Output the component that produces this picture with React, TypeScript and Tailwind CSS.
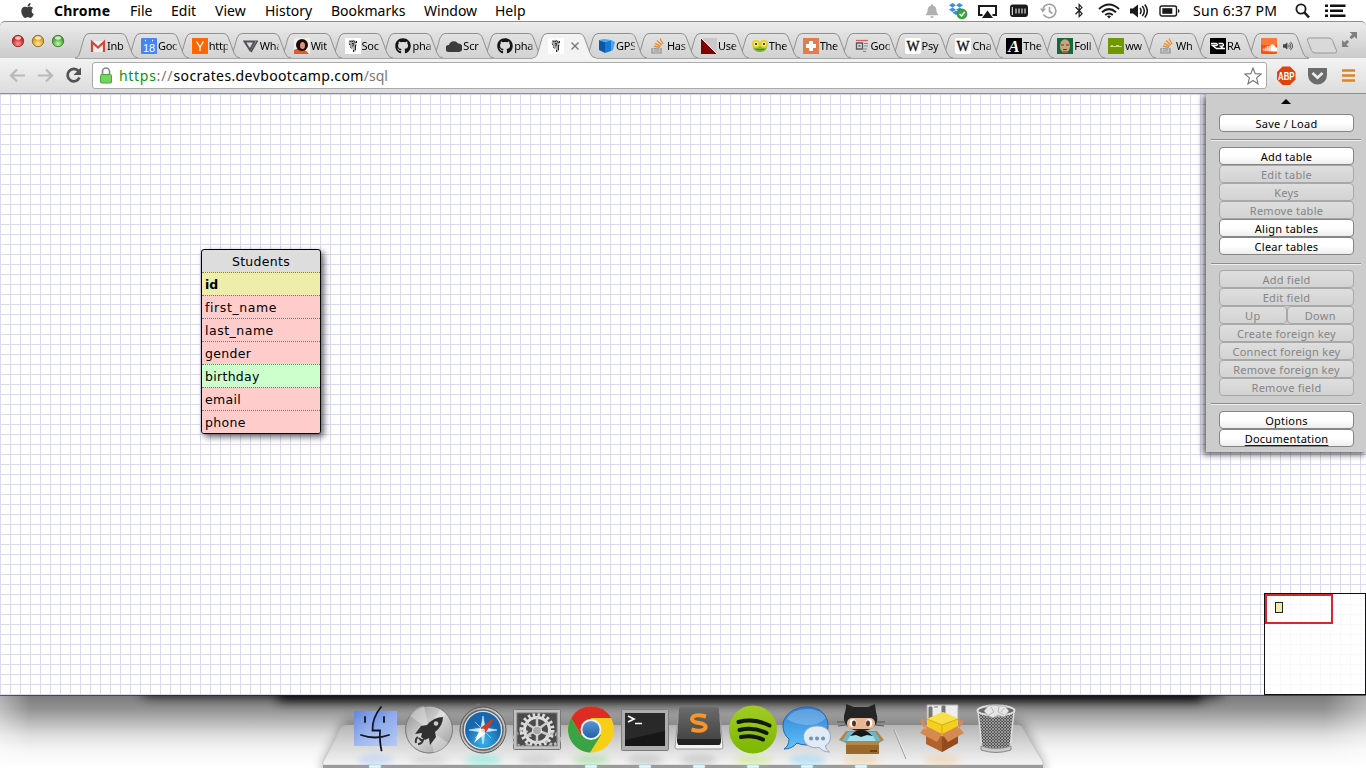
import React from "react";
import { FaApple, FaBell, FaDropbox, FaBluetoothB, FaGithub, FaSoundcloud, FaVolumeUp } from "react-icons/fa";

const UI = "font-['Noto_Sans','Open_Sans',sans-serif]";

/* ---------- menu bar ---------- */

const menus = [
  { label: "Chrome", cls: "w-[76px] font-bold tracking-[0.25px]" },
  { label: "File", cls: "w-[41px]" },
  { label: "Edit", cls: "w-[44px]" },
  { label: "View", cls: "w-[50px]" },
  { label: "History", cls: "w-[66px]" },
  { label: "Bookmarks", cls: "w-[93px]" },
  { label: "Window", cls: "w-[71px]" },
  { label: "Help", cls: "w-[40px]" },
];

function MenuBar() {
  return (
    <div className="flex h-[21px] items-center bg-white text-[14px] leading-[21px] text-black">
      <FaApple className="ml-[19px] mr-[18px] h-[17px] w-[17px] text-[#3c3c3c]" />
      {menus.map((m) => (
        <span key={m.label} className={"whitespace-nowrap " + m.cls}>{m.label}</span>
      ))}
      <div className="ml-auto flex items-center pr-5">
        <FaBell className="h-[14px] w-[14px] text-[#b0b0b0]" />
        <svg className="ml-[10px] h-[19px] w-[19px]" viewBox="0 0 19 19">
          <FaDropbox x="0" y="1" width="17" height="16" color="#3d8fd6" />
          <circle cx="13" cy="13" r="5" fill="#35a83b" stroke="#1d7c25" strokeWidth=".6" />
          <path d="M10.5 13l2 2 3.2-4" fill="none" stroke="#fff" strokeWidth="1.5" />
        </svg>
        <svg className="ml-[10px] h-4 w-[19px]" viewBox="0 0 19 16">
          <path d="M4.5 12H1V3h17v9h-3.500" fill="none" stroke="#1a1a1a" strokeWidth="2" />
          <path d="M9.500 7.500L15 15H4z" fill="#1a1a1a" />
        </svg>
        <svg className="ml-[13px] h-4 w-[18px]" viewBox="0 0 18 16">
          <rect x="0" y="1.500" width="18" height="12.500" rx="3" fill="#1a1a1a" />
          <path d="M2.300 4v8" stroke="#fff" strokeWidth="1" />
          <path d="M6 5.500v5M9 5.500v5M12 5.500v5M15 5.500v5" stroke="#ccc" strokeWidth="1.300" />
        </svg>
        <svg className="ml-[12px] h-4 w-[17px]" viewBox="0 0 17 16" fill="none" stroke="#a0a0a0" strokeWidth="1.600">
          <path d="M3 5.500A6.700 6.700 0 1 1 3.500 11.500M9.500 4v4.500l3 2" />
          <path d="M0 5.500h6L2.800 9.500z" fill="#a0a0a0" stroke="none" />
        </svg>
        <FaBluetoothB className="ml-[17px] h-[15px] w-[10px] text-[#222]" />
        <svg className="ml-[14px] h-4 w-[22px]" viewBox="0 0 22 16" fill="none" stroke="#1a1a1a" strokeWidth="2">
          <path d="M1 6Q11-3 21 6M4 9.200Q11 3 18 9.200M7.200 12Q11 9 14.800 12" />
          <path d="M9 13.200q2-1.500 4 0l-2 2.300z" fill="#1a1a1a" stroke="none" />
        </svg>
        <svg className="ml-[10px] h-4 w-[18px]" viewBox="0 0 18 16" fill="none" stroke="#1a1a1a" strokeWidth="1.500">
          <path d="M0 5.500h3l5-4v13l-5-4H0z" fill="#1a1a1a" stroke="none" />
          <path d="M10 5q2.200 3 0 6M12.300 3q4 5 0 10M14.800 1.500q5 6.500 0 13" />
        </svg>
        <svg className="ml-[11px] h-4 w-[21px]" viewBox="0 0 21 16">
          <rect x="1" y="3" width="16.500" height="10" rx="2" fill="none" stroke="#1a1a1a" strokeWidth="1.400" />
          <rect x="3.300" y="5.200" width="10" height="5.600" fill="#1a1a1a" />
          <path d="M19 6v4q1.500-.5 1.500-2T19 6z" fill="#1a1a1a" />
        </svg>
        <span className="ml-[13px] w-[84px] whitespace-nowrap tracking-[0.28px]">Sun 6:37 PM</span>
        <svg className="ml-[18px] h-4 w-[15px]" viewBox="0 0 15 16" fill="none" stroke="#1a1a1a">
          <circle cx="6" cy="6" r="4.600" strokeWidth="1.800" />
          <path d="M9.500 9.500l4.500 5" strokeWidth="2.600" />
        </svg>
        <svg className="ml-[15px] h-4 w-[21px]" viewBox="0 0 21 16" fill="#111">
          <path d="M0 1.500h3V4H0zM0 6.500h3V9H0zM0 11.500h3V14H0zM5 1.500h15.500V4H5zM5 6.500h13V9H5zM5 11.500h15.500V14H5z" />
        </svg>
      </div>
    </div>
  );
}

/* ---------- favicons, 16x16 ---------- */

const socrates = (
  <g>
    <rect width="16" height="16" fill="#fff" />
    <path d="M4 3q3-2 6-.5l2 1.500-1 2 1 1-1.500 2 .5 4-2 1L8 12l-1-3-1.500 1-1-2 1-1.500L3.500 6z" fill="#a8a8a8" />
    <path d="M4.500 3l2 .7M8.500 2.500l2 2.500M4 6l1.500 1M7 5.500h1.500l-.7 3M10.500 7v5M5.500 9l1 1.500M8.500 12v2M11.500 3v2M7.500 3v1" stroke="#222" strokeWidth="1" fill="none" />
  </g>
);
const github = <FaGithub width="16" height="16" size={16} color="#151515" />;
const wiki = (
  <g>
    <rect width="16" height="16" rx="2" fill="#fff" />
    <text x="1.500" y="13" fontSize="14" textLength="13" lengthAdjust="spacingAndGlyphs" fontFamily="Liberation Serif, serif" fill="#111" stroke="#111" strokeWidth=".35">W</text>
  </g>
);
const stack = (
  <g fill="none">
    <path d="M2 10v5h9v-5M3.500 13h6M3.500 10.700l6 .4" stroke="#8b8b8b" strokeWidth="1.200" />
    <path d="M4 8l6 1.500M5 5.300l5.700 2.900M7 2.500l4.800 4.500M10 .5l3 5.500" stroke="#ee8b2d" strokeWidth="1.300" />
  </g>
);

const icons: Record<string, React.ReactNode> = {
  gmail: (
    <g>
      <rect x="1" y="3" width="14" height="11" fill="#eee" />
      <path d="M2 14V4l6 5.500L14 4v10" fill="none" stroke="#d14836" strokeWidth="2.200" />
    </g>
  ),
  cal: (
    <g>
      <rect width="16" height="16" rx="1" fill="#4285f4" />
      <path d="M4 2.500h1M11 2.500h1" stroke="#fff" strokeWidth="1.500" />
      <text x="8" y="13.500" fontSize="11" textAnchor="middle" fontFamily="Liberation Sans, sans-serif" fill="#fff">18</text>
    </g>
  ),
  yc: (
    <g>
      <rect width="16" height="16" fill="#ff6600" />
      <path d="M4.500 3.500L8 9l3.500-5.500M8 8.500V13" fill="none" stroke="#fff" strokeWidth="1.300" />
    </g>
  ),
  tri: (
    <g fill="none" stroke="#4d5356">
      <path d="M1.500 3.500h10L7 12z" strokeWidth="2" />
      <path d="M14.500 2.500L8 14" strokeWidth="1.600" />
    </g>
  ),
  person: (
    <g>
      <rect width="16" height="16" fill="#f4efe9" />
      <path d="M0 12q8-5 15 4H0z" fill="#d95b32" />
      <circle cx="8" cy="7" r="6" fill="#190b09" />
      <ellipse cx="8.500" cy="7.500" rx="2.500" ry="3.500" fill="#e09470" />
    </g>
  ),
  socrates,
  github,
  cloud: <path d="M3 14a3.500 3.500 0 0 1 0-7 5 5 0 0 1 9-1.500A4 4 0 0 1 13 14z" fill="#3c3c3c" />,
  dbc: (
    <g>
      <path d="M0 2l6 2v11l-6-3z" fill="#0c58a6" />
      <path d="M6 4l6-2v11l-6 2z" fill="#1679d2" />
      <path d="M12 2l4 2-2 8-2 1zM5 1l7 1-6 2-6-2z" fill="#4aa5ee" />
    </g>
  ),
  stack,
  red: (
    <g>
      <rect width="16" height="16" fill="#c9c9c9" />
      <path d="M0 0l16 16H0z" fill="#800000" />
      <path d="M0 0l16 16" stroke="#fff" />
    </g>
  ),
  frog: (
    <g>
      <path d="M1 8h14q0 6-7 6T1 8z" fill="#84b735" />
      <circle cx="4" cy="6" r="4" fill="#e5ce20" />
      <circle cx="12" cy="6" r="4" fill="#e5ce20" />
      <circle cx="4" cy="6" r="2.200" fill="#fff8a0" />
      <circle cx="12" cy="6" r="2.200" fill="#fff8a0" />
      <circle cx="4" cy="6" r="1" />
      <circle cx="12" cy="6" r="1" />
      <path d="M4 11q4 2 8 0" stroke="#4c7a1d" fill="none" />
    </g>
  ),
  plus: (
    <g>
      <rect width="16" height="16" fill="#e27c4c" />
      <path d="M8 3v10M3 8h10" stroke="#fff" strokeWidth="4" />
    </g>
  ),
  news: (
    <g fill="none">
      <path d="M2 2.500h12" stroke="#d96060" strokeWidth="1.300" />
      <path d="M2.500 5h6v6h-6zM4.500 8h2" stroke="#555" strokeWidth="1.300" />
      <path d="M10 5.500h4M10 8h4M7 11h6M9 13.500h3" stroke="#888" />
    </g>
  ),
  wiki,
  a: (
    <g>
      <rect width="16" height="16" fill="#000" />
      <text x="8" y="14" fontSize="17" fontWeight="bold" fontStyle="italic" textAnchor="middle" fontFamily="Liberation Serif, serif" fill="#fff">A</text>
    </g>
  ),
  face: (
    <g>
      <rect width="16" height="16" fill="#16683e" />
      <ellipse cx="8" cy="8" rx="5" ry="6.800" fill="#c9a47c" />
      <path d="M4 7h3M9 7h3M6 11.500h4" stroke="#5a3f2a" />
      <path d="M5 15h6l-1-2H6z" fill="#8a6a4a" />
    </g>
  ),
  green: (
    <g>
      <rect width="16" height="16" fill="#6f9700" />
      <path d="M2 8.500h12M3 7.500h2M8 7.500h3" stroke="#c8dc8b" strokeWidth="1.200" />
    </g>
  ),
  ra: (
    <g>
      <rect width="16" height="16" fill="#000" />
      <path d="M1 5.500h5.500q2 1.500-.5 2H2.500l4 3H15M8.500 5.500h4q2 1.500 0 2.500l-2 .3 2.500 2" fill="none" stroke="#fff" strokeWidth="1.400" />
    </g>
  ),
  sc: (
    <g>
      <rect width="16" height="16" rx="1.500" fill="#ff4f0a" />
      <rect width="16" height="7" rx="1.500" fill="#ff7838" />
      <FaSoundcloud x="1.500" y="2" width="13" height="12" color="#fff" />
    </g>
  ),
};

const tabs: [string, string][] = [
  ["gmail", "Inb"], ["cal", "Goo"], ["yc", "http"], ["tri", "Wha"], ["person", "Wit"],
  ["socrates", "Soc"], ["github", "pha"], ["cloud", "Scr"], ["github", "pha"], ["socrates", ""],
  ["dbc", "GPS"], ["stack", "Has"], ["red", "Use"], ["frog", "The"], ["plus", "The"],
  ["news", "Goo"], ["wiki", "Psy"], ["wiki", "Cha"], ["a", "The"], ["face", "Foll"],
  ["green", "ww"], ["stack", "Wh"], ["ra", "RA"], ["sc", ""],
];

function Tab({ icon, title, index }: { icon: string; title: string; index: number }) {
  const active = index === 9;
  const audio = index === 23;
  const shape = "M0 25C4 24 4 22 5 19L9 5Q10.500 .5 14 .5H46Q50 .5 51.500 5L57 20Q59 25 63 25";
  return (
    <div className="relative w-[50.91px] shrink-0" style={{ zIndex: active ? 50 : 30 - index }}>
      <svg className="absolute left-0 top-0 h-[26px] w-[63px]" viewBox="0 0 63 26">
        <path d={shape} fill={active ? "#f3f3f3" : "url(#tabFill)"} stroke="#929292" strokeWidth="1" />
        {active ? <path d="M0 25.500h63" stroke="#f3f3f3" strokeWidth="1.200" /> : <path d="M0 25.500h63" stroke="#a5a5a5" />}
      </svg>
      <div className="relative flex h-[25px] items-center pl-[15px] pt-px">
        <svg className="h-4 w-4 shrink-0" viewBox="0 0 16 16">{icons[icon]}</svg>
        {active ? (
          <svg className="ml-[7px] h-2 w-2" viewBox="0 0 8 8"><path d="M.5 .5l7 7M7.500 .5l-7 7" stroke="#777" strokeWidth="1.400" /></svg>
        ) : audio ? (
          <FaVolumeUp className="ml-[6px] h-[10px] w-[10px] shrink-0 text-[#444]" />
        ) : (
          <span className="ml-px w-[19px] shrink-0 overflow-hidden whitespace-nowrap text-[11px] leading-4 tracking-[-0.25px] text-black [mask-image:linear-gradient(to_right,black_75%,#0006)]">{title}</span>
        )}
      </div>
    </div>
  );
}

function TabStrip() {
  return (
    <div className="flex h-[37px] rounded-t-[5px] border-t border-[#8d8d8d] bg-linear-to-b from-[#ececec] to-[#cbcbcb]">
      <svg className="h-[35px] w-[75px] shrink-0" viewBox="0 0 75 35">
        <defs>
          <linearGradient id="tabFill" x2="0" y2="1"><stop stopColor="#e2e2e2" /><stop offset="1" stopColor="#d2d2d2" /></linearGradient>
          <radialGradient id="lr" cy=".75"><stop stopColor="#ff9b95" /><stop offset="1" stopColor="#d3262a" /></radialGradient>
          <radialGradient id="ly" cy=".75"><stop stopColor="#ffe9a0" /><stop offset="1" stopColor="#dd9b22" /></radialGradient>
          <radialGradient id="lg" cy=".75"><stop stopColor="#c4f6a5" /><stop offset="1" stopColor="#4aa83c" /></radialGradient>
        </defs>
        {[["lr", 18, "#8f2826"], ["ly", 38, "#93691f"], ["lg", 58, "#3a7a31"]].map(([g, x, s]) => (
          <g key={g}>
            <circle cx={x} cy="19" r="5.700" fill={`url(#${g})`} stroke={s as string} strokeWidth=".9" />
            <ellipse cx={x} cy="16" rx="3" ry="1.700" fill="#fff" opacity=".75" />
          </g>
        ))}
      </svg>
      <div className="flex pt-[11px]">
        {tabs.map(([icon, title], i) => <Tab key={i} icon={icon} title={title} index={i} />)}
      </div>
      <svg className="ml-[9px] mt-[15px] h-[17px] w-[32px] shrink-0" viewBox="0 0 32 17">
        <path d="M3 1h20q2.500 0 3.500 2.500l4 10q.7 2.500-2 2.500H9q-2.500 0-3.500-2.500l-4-10Q1 1 3 1z" fill="#d9d9d9" stroke="#999" />
      </svg>
      <svg className="ml-[4px] mt-[10px] h-[15px] w-[15px] shrink-0" viewBox="0 0 15 15" fill="#808080">
        <path d="M7.500 0H15v7l-2.500-2.300-3 2.600L7.500 5.300l2.700-3zM7 15H0V8l2.300 2.300 2.900-2.400 2 2-2.800 2.700z" />
      </svg>
    </div>
  );
}

function Toolbar() {
  return (
    <div className="flex h-[36px] items-center border-b border-[#8e8e8e] bg-linear-to-b from-[#f3f3f3] to-[#dcdcdc]">
      <svg className="h-[36px] w-[92px] shrink-0" viewBox="0 0 92 36" fill="none">
        <path d="M25 17.500H11.500M17 11.500l-6 6 6 6M38 17.500h13.500M46 11.500l6 6-6 6" stroke="#b9b9b9" strokeWidth="2.200" />
        <path d="M78.500 13A6.200 6.200 0 1 0 79.500 19.500" stroke="#525252" strokeWidth="2.700" />
        <path d="M81 9.500v7.500h-7.500z" fill="#525252" />
      </svg>
      <div className="flex h-[27px] w-[1175px] shrink-0 items-center rounded-[3px] border border-[#aaa] bg-white pl-[7px] pr-[4px]">
        <svg className="h-[17px] w-3" viewBox="0 0 12 17">
          <path d="M2.500 8V4.500a3.500 3.500 0 0 1 7 0V8" fill="none" stroke="#8a8a8a" strokeWidth="1.700" />
          <rect x=".5" y="7.500" width="11" height="8.500" rx="1" fill="#72d45e" stroke="#49a83c" />
        </svg>
        <span className="ml-[7px] whitespace-nowrap text-[14px] leading-[22px] tracking-[0.39px] text-black">
          <span className="tracking-[0.7px] text-[#0a9411]">https</span><span className="tracking-[0.9px] text-[#777]">://</span>socrates.devbootcamp.com<span className="tracking-normal text-[#777]">/sql</span>
        </span>
        <svg className="ml-auto h-[18px] w-[18px]" viewBox="0 0 18 18">
          <path d="M9 1l2.200 5.600 6 .4-4.600 3.900L14.100 17 9 13.500 3.900 17l1.500-6.100L.8 7l6-.4z" fill="#fff" stroke="#757575" strokeWidth="1.100" />
        </svg>
      </div>
      <svg className="h-[36px] w-[99px] shrink-0" viewBox="0 0 99 36">
        <path d="M15.500 8.500h7.500l5.500 5.500v7.500L23 27h-7.500L10 21.500V14z" fill="#e0440e" />
        <text x="19.300" y="21.500" fontSize="10.500" fontWeight="bold" textAnchor="middle" textLength="16.500" lengthAdjust="spacingAndGlyphs" fontFamily="Liberation Sans, sans-serif" fill="#fff">ABP</text>
        <path d="M41 10h19v7a9.500 9.500 0 0 1-19 0z" fill="#6c6c6c" />
        <path d="M45.500 15l5 4.700 5-4.700" fill="none" stroke="#eee" strokeWidth="2.600" />
        <path d="M75 12.500h13M75 17.500h13M75 22.500h13" stroke="#df8420" strokeWidth="2.600" />
      </svg>
    </div>
  );
}

/* ---------- SQL designer ---------- */

const fields = [
  { name: "id", cls: "bg-[#eeeeaa] font-bold tracking-[-0.1px]" },
  { name: "first_name", cls: "bg-[#ffcccc] tracking-[0.6px]" },
  { name: "last_name", cls: "bg-[#ffcccc] tracking-[0.5px]" },
  { name: "gender", cls: "bg-[#ffcccc]" },
  { name: "birthday", cls: "bg-[#ccffcc]" },
  { name: "email", cls: "bg-[#ffcccc]" },
  { name: "phone", cls: "bg-[#ffcccc]" },
];

function StudentsTable() {
  return (
    <div className="absolute left-[201px] top-[155px] w-[120px] overflow-visible rounded-[3px] border border-black bg-[#ddd] font-['DejaVu_Sans',sans-serif] text-[12.500px] tracking-[0.3px] text-black shadow-[3px_3px_6px_rgba(0,0,0,0.6)]">
      <div className="h-[22px] text-center leading-[23px]">Students</div>
      {fields.map((f) => (
        <div key={f.name} className={"h-[23px] border-t border-dotted border-[#777] pl-[3px] leading-[23px] last:rounded-b-[2px] " + f.cls}>{f.name}</div>
      ))}
    </div>
  );
}

function Btn({ label, off = false, link = false }: { label: string; off?: boolean; link?: boolean }) {
  return (
    <button
      className={
        "block h-[18px] w-full rounded-[4px] border pt-px text-center text-[11px] leading-[16px] tracking-[0.25px] whitespace-nowrap " +
        (off
          ? "border-[#a8a8a8] bg-linear-to-b from-[#dedede] to-[#d3d3d3] text-[#858585]"
          : "border-[#858585] bg-linear-to-b from-white from-50% to-[#ededed] text-black")
      }
    >
      {link ? <span className="underline decoration-[#0000cc] decoration-1 underline-offset-2">{label}</span> : label}
    </button>
  );
}

function Rule() {
  return <div className="ml-[5px] mr-[5px] my-[7px] h-[2px] border-t border-b border-t-[#8d8d8d] border-b-[#eee]" />;
}

function Panel() {
  return (
    <div className="absolute right-0 top-0 h-[358px] w-[160px] bg-[#ccc] shadow-[-2px_2px_6px_1px_rgba(0,0,0,0.6)]">
      <div className="flex h-[20px] justify-center pt-[5px]">
        <svg className="h-[5px] w-[10px]" viewBox="0 0 10 5"><path d="M5 0l5 5H0z" /></svg>
      </div>
      <div className="pl-[13px] pr-[12px]"><Btn label="Save / Load" /></div>
      <Rule />
      <div className="pl-[13px] pr-[12px] pb-px -mt-px">
        <Btn label="Add table" />
        <Btn label="Edit table" off />
        <Btn label="Keys" off />
        <Btn label="Remove table" off />
        <Btn label="Align tables" />
        <Btn label="Clear tables" />
      </div>
      <Rule />
      <div className="pl-[13px] pr-[12px] -mt-[2px]">
        <Btn label="Add field" off />
        <Btn label="Edit field" off />
        <div className="flex">
          <Btn label="Up" off />
          <Btn label="Down" off />
        </div>
        <Btn label="Create foreign key" off />
        <Btn label="Connect foreign key" off />
        <Btn label="Remove foreign key" off />
        <Btn label="Remove field" off />
      </div>
      <Rule />
      <div className="-mt-px pl-[13px] pr-[12px]">
        <Btn label="Options" />
        <Btn label="Documentation" link />
      </div>
    </div>
  );
}

function Minimap() {
  return (
    <div className="absolute bottom-0 right-0 h-[102px] w-[102px] border border-[#111] bg-white/85">
      <div className="h-[30px] w-[68px] border-2 border-[#d92626] pl-[8px] pt-[6px]">
        <div className="h-[11px] w-[8px] border border-[#222] bg-[#eeeeaa]" />
      </div>
    </div>
  );
}

/* ---------- dock ---------- */

const dockIcons: React.ReactNode[] = [
  <g key="finder">
    <rect x="6" y="15" width="43" height="35" fill="url(#finder)" />
    <path d="M6 15h24q-5 10-5 20h7v15H6z" fill="#fff" opacity=".16" />
    <path d="M17 21v5M36 21v5" stroke="#1b2238" strokeWidth="2" strokeLinecap="round" />
    <path d="M33 11q-9 11-8.500 23.500h7.500q-.5 12 1.500 20M13 39q14 5 28 0" fill="none" stroke="#101827" strokeWidth="1.800" strokeLinecap="round" />
  </g>,
  <g key="launchpad">
    <circle cx="27" cy="33.500" r="23.500" fill="url(#silver)" stroke="#777" />
    <path d="M27 33.500L8 20q5-9 14-10zM27 33.500L46 47q-5 8-14 10zM27 33.500L38 13l6 5z" fill="#fff" opacity=".3" />
    <path d="M41 21q-9 0-16 8l-6 1-6 8 7-1-1 4 4 3 4-2 1 7 6-8-1-5q8-6 8-15z" fill="#303030" />
    <circle cx="34" cy="27.500" r="2.300" fill="#ccc" />
    <path d="M16 41q-3 2-2 6M17 42q2 3 4 2-1 4-5 4" stroke="#333" strokeWidth="2" fill="none" />
  </g>,
  <g key="safari">
    <circle cx="22" cy="10.500" r="2.500" fill="none" stroke="#777" />
    <circle cx="27" cy="34" r="23" fill="url(#silver)" stroke="#555" />
    <circle cx="27" cy="34" r="20" fill="none" stroke="#666" strokeWidth="1.500" />
    <circle cx="27" cy="34" r="18.500" fill="url(#blue)" stroke="#e4e4e4" strokeWidth="1.200" />
    <path d="M27 20l2 12 12 2-12 2-2 12-2-12-12-2 12-2zM19 26l16 16M35 26L19 42" fill="#c5eafb" stroke="#c5eafb" strokeWidth=".7" />
    <path d="M18 47l6.500-15 5 5z" fill="#fff" />
    <path d="M39 21l-14.500 11 5 5z" fill="#d73821" />
    <circle cx="27" cy="34.500" r="2" fill="#ddd" />
  </g>,
  <g key="prefs">
    <rect x="3.500" y="13.500" width="47" height="40" rx="1" fill="#c2c2c2" stroke="#777" />
    <rect x="7" y="17" width="40" height="33" fill="#4b4b4b" />
    <circle cx="12" cy="43" r="8" fill="none" stroke="#bbb" strokeWidth="4" strokeDasharray="3 2" />
    <circle cx="43" cy="43" r="6" fill="none" stroke="#bbb" strokeWidth="4" strokeDasharray="3 2" />
    <circle cx="27" cy="34" r="15.500" fill="none" stroke="#ddd" strokeWidth="4" strokeDasharray="2.500 2.370" />
    <circle cx="27" cy="34" r="12.500" fill="none" stroke="#dedede" strokeWidth="3" />
    <path d="M27 34V21M27 34l12 5M27 34l-11 6M27 34l11-8M27 34l-11-7M27 34v13" stroke="#ccc" strokeWidth="2.500" />
    <circle cx="27" cy="34.500" r="4.500" fill="#aaa" stroke="#eee" />
    <rect x="7" y="17" width="40" height="33" fill="none" stroke="#777" />
    <path d="M4 50.500h46v2.500h-46z" fill="#c2c2c2" />
  </g>,
  <g key="chrome">
    <circle cx="27" cy="33.500" r="23" fill="#f7cf16" />
    <path d="M27 22h20.300A23 23 0 0 0 7.100 22L17 39z" fill="#dc2c23" />
    <path d="M7.100 22A23 23 0 0 0 26 56.500L37 39 27 34 17 39z" fill="#3aa345" />
    <circle cx="27" cy="33.500" r="10.500" fill="#f1f1f1" />
    <circle cx="27" cy="33.500" r="8.600" fill="url(#chromeBlue)" />
  </g>,
  <g key="terminal">
    <rect x="3.500" y="13.500" width="47" height="41" rx="1" fill="#adadad" stroke="#7e7e7e" />
    <rect x="7" y="17" width="40" height="33" fill="#171717" />
    <path d="M47 17v18L7 44V17z" fill="#fff" opacity=".08" />
    <path d="M10 20l6 3-6 3M17 27.500h7" fill="none" stroke="#fff" strokeWidth="1.700" />
  </g>,
  <g key="sublime">
    <path d="M7 14h40l4 37q0 2-2 2H5q-2 0-2-2z" fill="#f2f2f2" stroke="#999" />
    <path d="M9 11h36q1.500 0 2 2l2 29q0 5-2 6H7q-2-1-2-6l2-29q.5-2 2-2z" fill="url(#sub)" />
    <path d="M5 43h44q0 6-2 6H7q-2 0-2-6z" fill="#222" />
    <path d="M34 20.500q-13-3.500-14 2.500 0 3 7 4 7.500 1 6.500 5-2.500 4.500-14 1.500" fill="none" stroke="#f7942a" strokeWidth="4" />
  </g>,
  <g key="spotify">
    <circle cx="27" cy="33.500" r="24" fill="url(#spot)" />
    <path d="M12.500 26q16-4 31 3.500M13.500 34q14-3.500 27 3M15 41q12-2.500 22 2.500" fill="none" stroke="#101a08" strokeWidth="4" strokeLinecap="round" />
  </g>,
  <g key="messages">
    <path d="M27 11c13 0 21 8 21 19S40 49 27 49q-6 0-10-2-5 6-13 6 5-3 5-10-6-5-6-13c0-11 11-19 24-19z" fill="url(#msg)" stroke="#2466aa" />
    <path d="M7 23q5-10 20-10t19 9q-8 8-20 7T7 23z" fill="#fff" opacity=".22" />
    <path d="M37 30c9 0 13.500 5 13.500 11 0 4-2 7-5 8.500 0 3 2 5 4 6.500-5 0-8-2-10-4.500-10 1.500-16-4-16-10.500S29 30 37 30z" fill="#e2ebf5" stroke="#91a9c1" />
    <path d="M31 42.500h.1M37 42.500h.1M43 42.500h.1" stroke="#7194b8" strokeWidth="4" strokeLinecap="round" />
  </g>,
  <g key="octocat">
    <path d="M12 35h31l7 9-5 3v11H12V47l-7-3z" fill="#b88445" />
    <path d="M14 36h27l6 9H8z" fill="#6bb8cc" />
    <path d="M18 37h19l5 8H13z" fill="#a5dfea" />
    <path d="M12 46h33v12H12z" fill="#9b692c" />
    <path d="M12 46h33v3H12z" fill="#b88445" />
    <path d="M12 12V8l8 3h14l7-3 1 8q3 8-1 14-5 5-14 5t-14-5q-5-6-2-14z" fill="#252525" />
    <rect x="13" y="22" width="28" height="11" rx="5" fill="#e7b694" />
    <ellipse cx="19" cy="27" rx="3.300" ry="4" fill="#fff" />
    <ellipse cx="35" cy="27" rx="3.300" ry="4" fill="#fff" />
    <ellipse cx="20" cy="27.500" rx="2" ry="3" fill="#5b3426" />
    <ellipse cx="34" cy="27.500" rx="2" ry="3" fill="#5b3426" />
    <path d="M16 40q5-6 11-6t12 6l-6-1-6 2-5-2z" fill="#171717" />
    <path d="M3 26h8M4 30l8-1M51 26h-8M50 30l-8-1" stroke="#555" />
    <path d="M36 55h7" stroke="#59350f" strokeWidth="1.500" />
  </g>,
];

function Glow({ color }: { color: string }) {
  return <ellipse cx="27" cy="64" rx="18" ry="5" fill={color} opacity=".35" filter="url(#blur)" />;
}

const reflections = ["#8fb7ff", "#bbbbbb", "#35e8c8", "#aaaaaa", "#6ad05a", "#999999", "#999999", "#aee83b", "#55c8ff", "#f5bc68"];
const running = [0, 4, 5, 6, 7, 8, 9];

function Dock() {
  return (
    <div className="relative h-[73px] overflow-hidden bg-white">
      <svg className="absolute left-0 top-0 h-[73px] w-[1366px]" viewBox="0 -1 1366 73">
        <defs>
          <filter id="blur" x="-50%" y="-100%" width="200%" height="300%"><feGaussianBlur stdDeviation="3" /></filter>
          <filter id="soft" x="-10%" y="-100%" width="120%" height="300%"><feGaussianBlur stdDeviation="6" /></filter>
          <linearGradient id="fall" x2="0" y2="1">
            <stop stopColor="#000" stopOpacity=".52" />
            <stop offset=".2" stopColor="#000" stopOpacity=".42" />
            <stop offset=".38" stopColor="#000" stopOpacity=".27" />
            <stop offset=".55" stopColor="#000" stopOpacity=".13" />
            <stop offset=".75" stopColor="#000" stopOpacity=".04" />
            <stop offset="1" stopColor="#000" stopOpacity="0" />
          </linearGradient>
          <linearGradient id="sides">
            <stop stopColor="#fff" stopOpacity=".4" />
            <stop offset=".022" stopColor="#fff" stopOpacity="0" />
            <stop offset=".97" stopColor="#fff" stopOpacity="0" />
            <stop offset="1" stopColor="#fff" stopOpacity=".4" />
          </linearGradient>
          <linearGradient id="shelf" x2="0" y2="1"><stop stopColor="#b5b5b5" /><stop offset=".5" stopColor="#d8d8d8" /><stop offset="1" stopColor="#f4f4f4" /></linearGradient>
          <linearGradient id="finder" x2="1" y2="1"><stop stopColor="#466fd7" /><stop offset=".5" stopColor="#8eabec" /><stop offset="1" stopColor="#b6c9f0" /></linearGradient>
          <linearGradient id="silver" x2="1" y2="1"><stop stopColor="#8c8c8c" /><stop offset=".5" stopColor="#d5d5d5" /><stop offset="1" stopColor="#999" /></linearGradient>
          <radialGradient id="blue" cy=".8"><stop stopColor="#3ab8ee" /><stop offset="1" stopColor="#1867ae" /></radialGradient>
          <linearGradient id="chromeBlue" x2="0" y2="1"><stop stopColor="#5a97d6" /><stop offset="1" stopColor="#215fa8" /></linearGradient>
          <linearGradient id="sub" x2="0" y2="1"><stop stopColor="#6b6b6b" /><stop offset="1" stopColor="#3f3f3f" /></linearGradient>
          <linearGradient id="spot" x2="0" y2="1"><stop stopColor="#a2cc23" /><stop offset="1" stopColor="#7cb600" /></linearGradient>
          <linearGradient id="msg" x2="0" y2="1"><stop stopColor="#317ed0" /><stop offset="1" stopColor="#5dc4ff" /></linearGradient>
          <pattern id="mesh" width="3" height="3" patternUnits="userSpaceOnUse"><rect width="3" height="3" fill="#535353" /><path d="M0 0l3 3M3 0L0 3" stroke="#b5b5b5" strokeWidth=".7" /></pattern>
        </defs>
        <rect y="-1" width="1366" height="73" fill="url(#fall)" />
        <rect y="-1" width="1366" height="73" fill="url(#sides)" />
        <rect x="143" y="-40" width="1078" height="41" fill="#000" opacity=".75" filter="url(#soft)" />
        <rect x="278" y="-40" width="924" height="45" fill="#000" opacity=".85" filter="url(#soft)" />
        <path d="M345 24H1020L1043 68V80H323V68z" fill="#000" opacity=".35" filter="url(#soft)" />
        <path d="M346 29.500H1018Q1021 29.500 1022 31.500L1043 66V69H323V66L341 32Q342.500 29.500 346 29.500z" fill="url(#shelf)" stroke="#bdbdbd" strokeWidth=".7" />
        <path d="M323 69h720v4H323z" fill="#9b9b9b" />
        <path d="M0-.5h1366" stroke="#222" strokeWidth="1" opacity=".6" />
      </svg>
      <div className="relative flex pl-[348px] pt-px">
        {dockIcons.map((icon, i) => (
          <svg key={i} className="h-[72px] w-[54px] shrink-0" viewBox="0 0 54 72">
            <Glow color={reflections[i]} />
            {icon}
            {running.includes(i) ? <rect x="21" y="69" width="12" height="3" rx="1" fill="#dffaff" stroke="#8fdcf5" strokeWidth=".5" /> : null}
          </svg>
        ))}
        <svg className="h-[72px] w-[27px] shrink-0" viewBox="0 0 27 72"><path d="M6 34l12 29" stroke="#999" /><path d="M7 34l12 29" stroke="#eee" strokeWidth=".6" /></svg>
        <svg className="h-[72px] w-[54px] shrink-0" viewBox="0 0 54 72">
          <Glow color="#f5b875" />
          <path d="M12 9h31v18H12z" fill="#eee" stroke="#aaa" />
          <path d="M14 11h3v12h-3zM19 11h4M27 10h3v10h-3z" fill="#777" stroke="#777" />
          <path d="M11 32l16 8 16-8v15L27 56 11 48z" fill="#b0622d" />
          <path d="M27 42l16-8v13L27 56z" fill="#934b1d" />
          <path d="M12 23l16-7 15 7v8l-16 9-15-8z" fill="#f3d01d" />
          <path d="M12 23l15 6 16-6-15-7z" fill="#f9e04a" />
          <path d="M12 23l15 6 16-6M27 29v11" fill="none" stroke="#dba90e" />
          <path d="M11 30l16 8-5 8-17-9zM43 30l-16 8 6 8 16-9zM11 30l-3-9-3 5 6 8zM43 31l1-8 5 3-6 7z" fill="#d68a52" />
        </svg>
        <svg className="h-[72px] w-[54px] shrink-0" viewBox="0 0 54 72">
          <path d="M9 15l4 37q1 4 14 4t14-4l4-37z" fill="url(#mesh)" />
          <path d="M9 15l4 37M45 15l-4 37" stroke="#ddd" strokeWidth="1.500" />
          <path d="M12 50q15 5 30 0v4q-15 5-30 0z" fill="#c9c9c9" stroke="#888" />
          <ellipse cx="27" cy="14.500" rx="18.500" ry="5" fill="#696969" stroke="#ddd" strokeWidth="2" />
          <path d="M15 15l4-5 6-1 5 1 6 0 4 5-5 6-6-2-5 3-6-3z" fill="#e6e6e6" stroke="#999" strokeWidth=".7" />
          <path d="M22 11l3 5-5 3M30 11l-1 5 6 3M35 12l-3 4" fill="none" stroke="#aaa" strokeWidth=".8" />
        </svg>
      </div>
    </div>
  );
}

export default function App() {
  return (
    <div className={"flex h-[768px] w-[1366px] flex-col overflow-hidden bg-white " + UI}>
      <MenuBar />
      <TabStrip />
      <Toolbar />
      <main className="relative h-[601px] shrink-0 overflow-hidden bg-white bg-[linear-gradient(to_right,#d9d9ef_1px,transparent_1px),linear-gradient(to_bottom,#d9d9ef_1px,transparent_1px)] bg-[size:10px_10px]">
        <StudentsTable />
        <Panel />
        <Minimap />
      </main>
      <Dock />
    </div>
  );
}
